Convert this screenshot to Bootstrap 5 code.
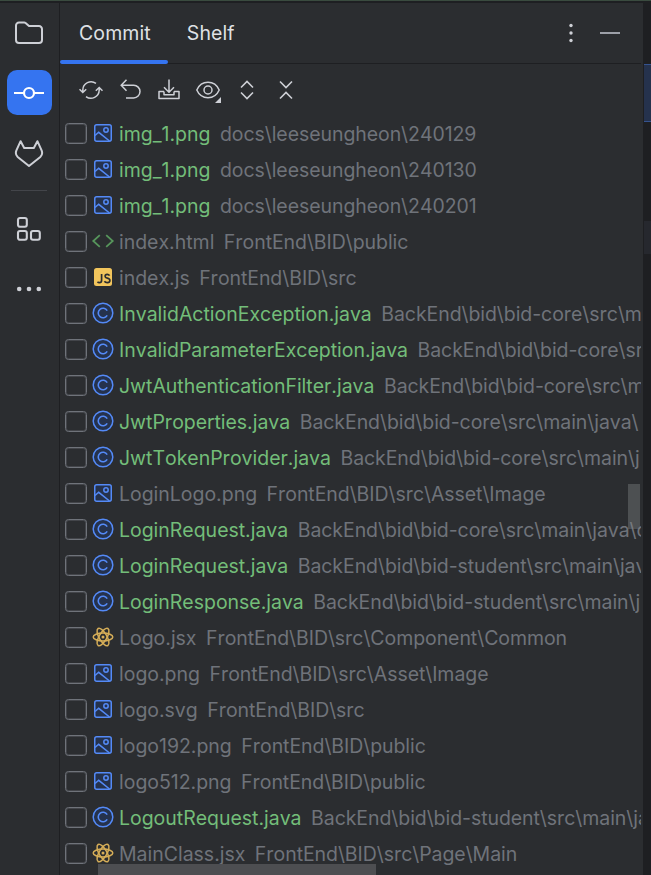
<!DOCTYPE html>
<html lang="en" data-bs-theme="dark">
<head>
<meta charset="utf-8">
<meta name="viewport" content="width=device-width, initial-scale=1">
<title>Commit</title>
<link href="https://cdn.jsdelivr.net/npm/bootstrap@5.3.0/dist/css/bootstrap.min.css" rel="stylesheet">
<style>
:root{--panel:#2b2d30;--edge:#1e1f22;--ink:#ced0d6;--muted:#6f737a;--added:#73bd79;--accent:#3574f0}
body{width:651px;height:875px;background:var(--panel);font-family:Inter,"Liberation Sans",sans-serif;font-size:19.5px;line-height:36px;color:#dfe1e5;font-kerning:none}
svg{display:block;flex:none;fill:none;stroke:var(--ink)}
.topline{height:3px;flex:none;background:var(--edge);border-top:1px solid #3a4b3f}
.rail{width:60px;border-right:1px solid var(--edge);padding-top:7px;flex:none;gap:15px}
.tool{width:45px;height:45px;border-radius:10px;padding:0;border:0;margin-left:-1px}
.tool.active{background:var(--accent)}
.tool.active svg{stroke:#fff}
.rail-rule{width:36px;height:1px;background:#43454a;margin-left:-1px}
.tabs{height:61px;border-bottom:1px solid var(--edge)}
.tabs .nav-link{color:#dfe1e5;padding:0;height:61px;line-height:60px;letter-spacing:.1px;border-radius:0}
.tabs .nav-link.active{position:relative;margin:0 36px 0 19px}
.tabs .nav-link.active::after{content:"";position:absolute;left:-19px;right:-17px;bottom:0;height:4px;border-radius:2px;background:var(--accent)}
.actions{height:52px;padding:0 0 0 19px;gap:15px}
.header-tools{padding-right:19px;gap:15px}
.pane{width:581px;flex:none}
.files{position:relative}
.file{height:36px;padding-left:5px;white-space:nowrap;overflow:hidden}
.box{width:22px;height:21px;border:1px solid #6f737a;box-shadow:inset 0 0 0 1px rgba(111,115,122,.35);border-radius:3.5px;flex:none;margin:-1px 5px 0 0}
.ico{width:24px;height:24px;margin:-2px 4px 0 -1px}
.name,.path{color:var(--muted);letter-spacing:-.02px}
.path{margin-left:9.5px;letter-spacing:-.07px}
.name.added{color:var(--added)}
.vbar{position:absolute;right:1px;top:368px;width:12px;height:45px;background:rgba(130,132,136,.4)}
.hbar{position:absolute;left:38px;bottom:0;width:278px;height:11px;background:#4d4e51}
.editor{background:var(--edge);margin-left:2px}
.pick{margin:61px 0 0 1px;height:58px;background:#25324d;border:1px solid #35538f;border-width:1px 0}
.mark-line{margin:99px 0 0 1px;height:33px;background:#26282e}
</style>
<script src="https://cdn.jsdelivr.net/npm/bootstrap@5.3.0/dist/js/bootstrap.bundle.min.js"></script>
</head>
<body class="d-flex flex-column overflow-hidden">
<svg width="0" height="0" class="position-absolute">
<symbol id="img" viewBox="0 0 24 24"><g stroke="#548af7" stroke-width="1.5"><rect x="3.75" y="3.75" width="16.5" height="16.5" rx="2" fill="#25324d"/><circle cx="15" cy="9" r="2.2"/><path d="M4 14.5 7.7 11.3 18.5 20"/></g></symbol>
<symbol id="cls" viewBox="0 0 24 24"><circle cx="12" cy="12" r="9.8" fill="#25324d" stroke="#548af7" stroke-width="1.5"/><path d="M16.2 9.6A4.8 4.8 0 1 0 16.2 14.4" stroke="#548af7" stroke-width="1.6"/></symbol>
<symbol id="htm" viewBox="0 0 24 24"><path d="M8.8 6.2 2.3 12l6.5 5.8M15.2 6.2l6.5 5.8-6.5 5.8" stroke="#57965c" stroke-width="1.8"/></symbol>
<symbol id="js" viewBox="0 0 24 24"><rect x="3" y="3" width="18" height="18" rx="2.5" fill="#f2c55c" stroke="none"/><path d="M10.6 9v6.3q0 2.4-2.2 2.4-1.2 0-1.9-.9M18.6 10.6q-.8-1.2-2.4-1.2-2.1 0-2.1 1.8 0 1.4 2.2 1.9 2.6.6 2.6 2.4 0 2.1-2.6 2.1-2 0-2.9-1.4" stroke="#2b2d30" stroke-width="1.7"/></symbol>
<symbol id="react" viewBox="0 0 24 24"><g stroke="#d6ae58" stroke-width="1.5"><ellipse cx="12" cy="12" rx="9.8" ry="3.9"/><ellipse cx="12" cy="12" rx="9.8" ry="3.9" transform="rotate(60 12 12)"/><ellipse cx="12" cy="12" rx="9.8" ry="3.9" transform="rotate(120 12 12)"/><circle cx="12" cy="12" r="1.5" fill="#d6ae58" stroke="none"/></g></symbol>
</svg>
<div class="topline"></div>
<div class="d-flex flex-grow-1">
<nav class="rail d-flex flex-column align-items-center">
<button class="tool btn d-flex align-items-center justify-content-center"><svg width="30" height="30" viewBox="0 0 30 30" stroke-width="2"><path d="M2 7.5a3 3 0 0 1 3-3h5.2a2 2 0 0 1 1.4.6L15 8.1h10a3 3 0 0 1 3 3V22a3 3 0 0 1-3 3H5a3 3 0 0 1-3-3Z"/></svg></button>
<button class="tool active btn d-flex align-items-center justify-content-center"><svg width="30" height="30" viewBox="0 0 30 30" stroke-width="2.2"><circle cx="15" cy="15" r="5"/><path d="M0 15h10M20 15h10"/></svg></button>
<button class="tool btn d-flex align-items-center justify-content-center"><svg width="30" height="30" viewBox="0 0 30 30" stroke-width="2" stroke-linejoin="round"><path d="M6.6 3.2 10.2 10h9.6l3.6-6.8 4.2 9.2c1 2.5.4 5-1.3 6.6L15 28 3.7 19c-1.7-1.6-2.3-4.1-1.3-6.6Z"/></svg></button>
<div class="rail-rule"></div>
<button class="tool btn d-flex align-items-center justify-content-center"><svg width="30" height="30" viewBox="0 0 30 30" stroke-width="2.1"><rect x="4" y="4" width="8.8" height="8.8" rx="2"/><rect x="4" y="17" width="8.8" height="8.8" rx="2"/><rect x="17" y="17" width="8.8" height="8.8" rx="2"/></svg></button>
<button class="tool btn d-flex align-items-center justify-content-center"><svg width="30" height="30" viewBox="0 0 30 30"><g fill="#ced0d6" stroke="none"><circle cx="5.2" cy="15" r="2.3"/><circle cx="15" cy="15" r="2.3"/><circle cx="24.8" cy="15" r="2.3"/></g></svg></button>
</nav>
<main class="pane d-flex flex-column">
<header class="tabs d-flex align-items-center">
<div class="nav flex-nowrap"><a class="nav-link active">Commit</a><a class="nav-link">Shelf</a></div>
<div class="header-tools ms-auto d-flex"><svg width="24" height="24" viewBox="0 0 24 24"><g fill="#ced0d6" stroke="none"><circle cx="12" cy="4.5" r="1.7"/><circle cx="12" cy="12" r="1.7"/><circle cx="12" cy="19.5" r="1.7"/></g></svg><svg width="24" height="24" viewBox="0 0 24 24"><path d="M2 12h20" stroke="#9da0a8" stroke-width="2"/></svg></div>
</header>
<div class="actions d-flex align-items-center">
<svg width="24" height="24" viewBox="0 0 24 24" stroke-width="1.5"><path d="M3.8 14.4V12a8.3 8.3 0 0 1 13.2-6.6M.5 11.2l3.3 3.3 3.4-3.3M20.2 9.6V12A8.3 8.3 0 0 1 7 18.6M16.8 12.8l3.4-3.3 3.3 3.3"/></svg>
<svg width="24" height="24" viewBox="0 0 24 24" stroke-width="1.5"><path d="M8.5 1.8 3.2 7.3l5.3 5.4M3.5 7.3h12.2a6.2 6.2 0 0 1 0 12.6H8"/></svg>
<svg width="24" height="24" viewBox="0 0 24 24" stroke-width="1.5"><path d="M12 1.5V14M7 9.3l5 5 5-5M7 13.5H2v7h20v-7h-5M7 13.5v3.2h10v-3.2" stroke-linejoin="round"/></svg>
<svg width="24" height="24" viewBox="0 0 24 24" stroke-width="1.5" class="overflow-visible"><path d="M.8 12C3 7 7 4.3 12 4.3S21 7 23.2 12C21 17 17 19.7 12 19.7S3 17 .8 12Z"/><circle cx="12" cy="12" r="4"/><path d="M25 19v6h-6Z" fill="#ced0d6" stroke="none"/></svg>
<svg width="24" height="24" viewBox="0 0 24 24" stroke-width="1.6"><path d="m6 9.5 6-6 6 6M6 14.5l6 6 6-6"/></svg>
<svg width="24" height="24" viewBox="0 0 24 24" stroke-width="1.6"><path d="m6 3.5 6 6 6-6M6 20.5l6-6 6 6"/></svg>
</div>
<section class="files flex-grow-1">
<div class="file d-flex align-items-center"><span class="box"></span><svg class="ico"><use href="#img"/></svg><span class="name added">img_1.png</span><span class="path">docs\leeseungheon\240129</span></div>
<div class="file d-flex align-items-center"><span class="box"></span><svg class="ico"><use href="#img"/></svg><span class="name added">img_1.png</span><span class="path">docs\leeseungheon\240130</span></div>
<div class="file d-flex align-items-center"><span class="box"></span><svg class="ico"><use href="#img"/></svg><span class="name added">img_1.png</span><span class="path">docs\leeseungheon\240201</span></div>
<div class="file d-flex align-items-center"><span class="box"></span><svg class="ico"><use href="#htm"/></svg><span class="name">index.html</span><span class="path">FrontEnd\BID\public</span></div>
<div class="file d-flex align-items-center"><span class="box"></span><svg class="ico"><use href="#js"/></svg><span class="name">index.js</span><span class="path">FrontEnd\BID\src</span></div>
<div class="file d-flex align-items-center"><span class="box"></span><svg class="ico"><use href="#cls"/></svg><span class="name added">InvalidActionException.java</span><span class="path">BackEnd\bid\bid-core\src\m</span></div>
<div class="file d-flex align-items-center"><span class="box"></span><svg class="ico"><use href="#cls"/></svg><span class="name added">InvalidParameterException.java</span><span class="path">BackEnd\bid\bid-core\sr</span></div>
<div class="file d-flex align-items-center"><span class="box"></span><svg class="ico"><use href="#cls"/></svg><span class="name added">JwtAuthenticationFilter.java</span><span class="path">BackEnd\bid\bid-core\src\m</span></div>
<div class="file d-flex align-items-center"><span class="box"></span><svg class="ico"><use href="#cls"/></svg><span class="name added">JwtProperties.java</span><span class="path">BackEnd\bid\bid-core\src\main\java\</span></div>
<div class="file d-flex align-items-center"><span class="box"></span><svg class="ico"><use href="#cls"/></svg><span class="name added">JwtTokenProvider.java</span><span class="path">BackEnd\bid\bid-core\src\main\j</span></div>
<div class="file d-flex align-items-center"><span class="box"></span><svg class="ico"><use href="#img"/></svg><span class="name">LoginLogo.png</span><span class="path">FrontEnd\BID\src\Asset\Image</span></div>
<div class="file d-flex align-items-center"><span class="box"></span><svg class="ico"><use href="#cls"/></svg><span class="name added">LoginRequest.java</span><span class="path">BackEnd\bid\bid-core\src\main\java\c</span></div>
<div class="file d-flex align-items-center"><span class="box"></span><svg class="ico"><use href="#cls"/></svg><span class="name added">LoginRequest.java</span><span class="path">BackEnd\bid\bid-student\src\main\jav</span></div>
<div class="file d-flex align-items-center"><span class="box"></span><svg class="ico"><use href="#cls"/></svg><span class="name added">LoginResponse.java</span><span class="path">BackEnd\bid\bid-student\src\main\j</span></div>
<div class="file d-flex align-items-center"><span class="box"></span><svg class="ico"><use href="#react"/></svg><span class="name">Logo.jsx</span><span class="path">FrontEnd\BID\src\Component\Common</span></div>
<div class="file d-flex align-items-center"><span class="box"></span><svg class="ico"><use href="#img"/></svg><span class="name">logo.png</span><span class="path">FrontEnd\BID\src\Asset\Image</span></div>
<div class="file d-flex align-items-center"><span class="box"></span><svg class="ico"><use href="#img"/></svg><span class="name">logo.svg</span><span class="path">FrontEnd\BID\src</span></div>
<div class="file d-flex align-items-center"><span class="box"></span><svg class="ico"><use href="#img"/></svg><span class="name">logo192.png</span><span class="path">FrontEnd\BID\public</span></div>
<div class="file d-flex align-items-center"><span class="box"></span><svg class="ico"><use href="#img"/></svg><span class="name">logo512.png</span><span class="path">FrontEnd\BID\public</span></div>
<div class="file d-flex align-items-center"><span class="box"></span><svg class="ico"><use href="#cls"/></svg><span class="name added">LogoutRequest.java</span><span class="path">BackEnd\bid\bid-student\src\main\ja</span></div>
<div class="file d-flex align-items-center"><span class="box"></span><svg class="ico"><use href="#react"/></svg><span class="name">MainClass.jsx</span><span class="path">FrontEnd\BID\src\Page\Main</span></div>
<div class="vbar"></div><div class="hbar"></div>
</section>
</main>
<aside class="editor flex-grow-1"><div class="pick"></div><div class="mark-line"></div></aside>
</div>
</body>
</html>
